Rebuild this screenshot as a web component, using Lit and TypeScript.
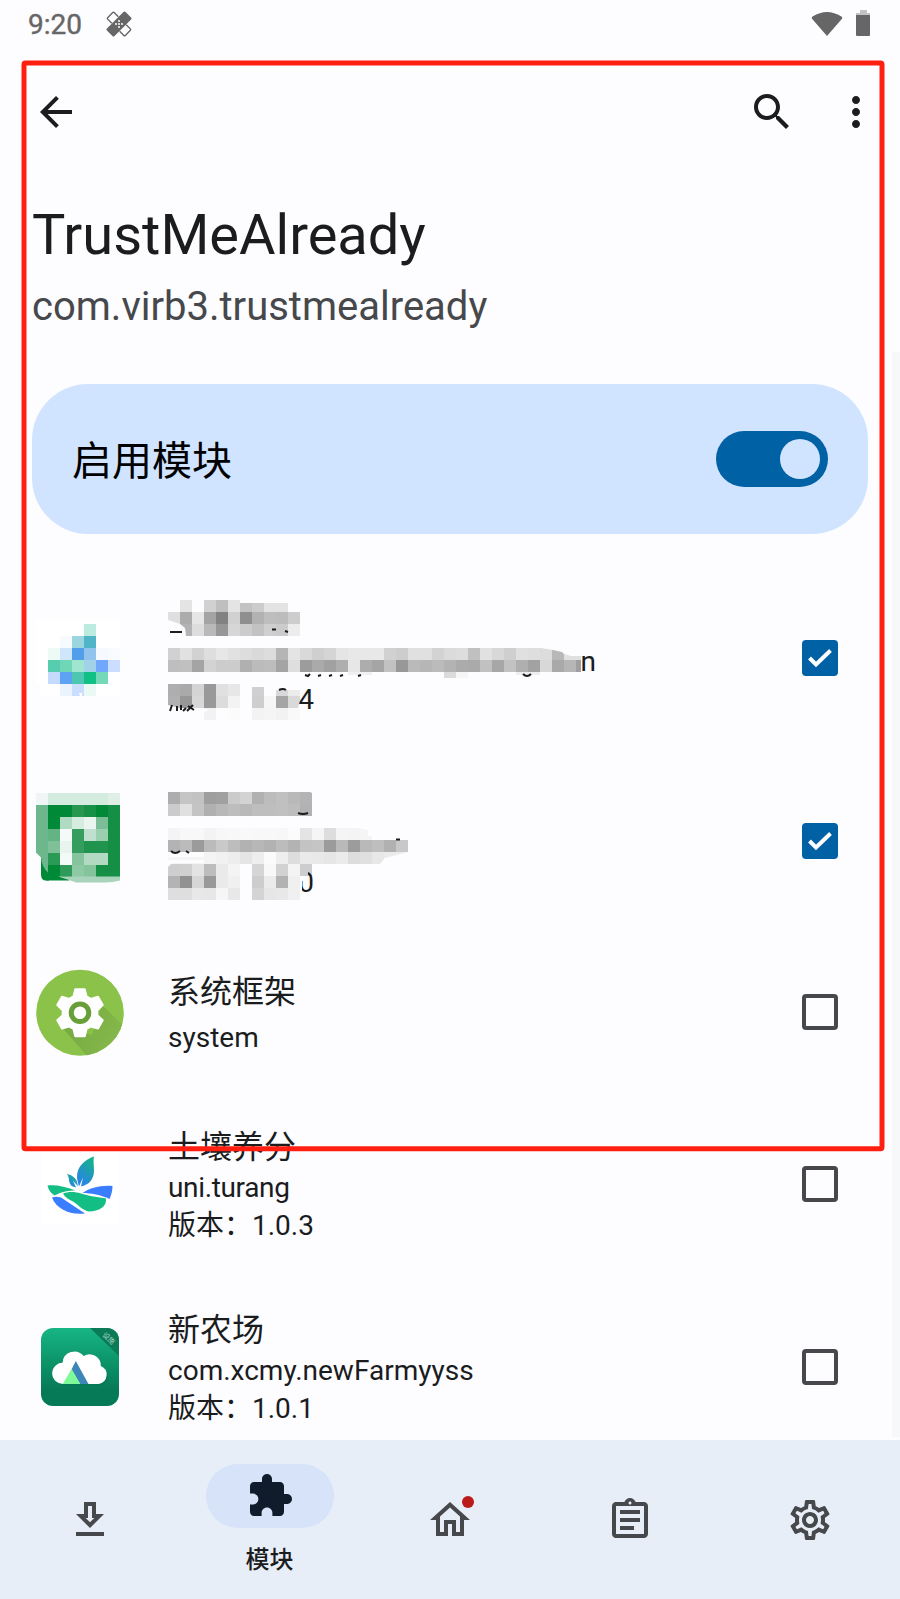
import { LitElement, html, svg, css, nothing } from "lit";
import { customElement, property } from "lit/decorators.js";

const CELL = 12;

// Each mosaic line: origin x, origin y, then one shade per 12px cell ("-" leaves a hole).
type Line = [number, number, string, number?];

const shade = (v: string) => (v.length === 2 ? `#${v}${v}${v}` : `#${v}`);

const mosaic = (lines: Line[]) =>
  lines.map(([x, y, cells, h = CELL]) =>
    cells.split(" ").map((c, i) =>
      c === "-"
        ? nothing
        : svg`<rect x=${x + i * CELL} y=${y} width=${CELL} height=${h} fill=${shade(c)} shape-rendering="crispEdges"/>`
    )
  );

const textMosaicA: Line[] = [
  [168, 600, "- e4 - d1 bf e4"],
  [240, 603, "c3 cc e3 e3", 9],
  [168, 612, "df ac e6 a4 82 d1 8f b2 be bc cd"],
  [168, 624, "- b3 dd b9 97 d6 cc c2 cf cb ec"],
  [168, 648, "d1 e1 d2 de e7 e1 dd d9 dd b5 e4 d9 cf d5 e5 e8 e8 e8 d1 cd e0 e0 d3 db dd c0 e1 d8 cf e0 de dc b8 e0 e0"],
  [168, 660, "be c0 a4 d3 cc cc b0 bb bd a4 de 9c aa a1 ae e7 ad a5 c2 98 ba b6 bb b3 ab aa c1 a7 c2 af a2 d8 a9 b6 9f"],
  [348, 672, "f0 f0", 3],
  [444, 672, "db f6", 6],
  [516, 672, "ee ee", 3],
  [168, 684, "ae aa d4 99 e0 e7"],
  [252, 687, "d0", 9],
  [276, 690, "d8 ec", 6],
  [168, 696, "b0 97 d7 99 dc f3 - ce f6 a5 d9"],
  [204, 708, "f2 - fb - f3 f5 f2 f9"],
];

const textMosaicB: Line[] = [
  [168, 792, "ad c5 c2 9e a0 cb d3 b1 bc c0 b9 b3"],
  [168, 804, "cb e0 c4 b0 b8 bd b9 be be c0 bd b2"],
  [168, 828, "f4 f8 f8 f3 f7 f8 f9 f8 f8 f7 fb e4 f5 dd f5 f4 f5"],
  [168, 840, "b3 bb 9b bb c9 bd b2 b7 b2 bc b3 c3 c5 9b b9 9c b9 be b1 c8"],
  [168, 857, "f5 f5 f5", 7],
  [204, 852, "f4 f1 ed e5 ee fb ee dd ea e9 e6 eb dd e0 e8"],
  [384, 852, "eb ec", 6],
  [168, 864, "ce d0 e3 bd ea f4 - d5 f8 d2 f4 cd"],
  [168, 876, "b3 91 d6 99 ea f0 - cd eb b2 f0"],
  [168, 888, "de de e8 e7 f6 e8 - d4 e6 e8 f0"],
];

const iconMosaicA: Line[] = [
  [84, 624, "bcebe0"],
  [60, 636, "f6fbff 9bd5e0 50b5c6"],
  [48, 648, "eefaf5 d0e7fb 539eea 91c3ee f6f9ff f9fbff"],
  [48, 660, "57cdaf 6fd7b6 9fe5cf a1d2e8 71a7fc ccdeff"],
  [48, 672, "c5daff 5ea3f3 4dc7b0 10c085 74d9b8"],
  [60, 684, "ebf3ff cadeff ebf9f5"],
];

const iconMosaicB: Line[] = [
  [36, 792, "eff6f5 d4ebe0 d4ebe0 d4ebe0 d4ebe0 d4ebe0 dfefe6"],
  [36, 804, "6db78c 008a38 008a38 27964e 189148 008a38 158f46"],
  [36, 816, "6db78c 008a38 b0dac2 d6ece0 ebf5f0 7abd96 158f46"],
  [36, 828, "6db78c 62b482 f5faf8 359e5e bfe0cf 9ad0af 158f46"],
  [36, 840, "6db78c 7fc098 e9f4ee 359e5e 20944e 20944e 158f46"],
  [48, 852, "2b9a56 f4faf8 86c49e b2dac3 b2dac3 158f46"],
  [48, 864, "008a38 2f9b5a 8ec9a5 84c49d 158f46 158f46"],
];

const blurredIconA = svg`
  <path d="M36 619h84v77H41l-1-12h-4z" fill="#fff"/>
  ${mosaic(iconMosaicA)}
  <path d="M79 693h3v3h-2z" fill="#fff"/>`;

const blurredIconB = svg`
  <path d="M41 850h8v30h-3q-5 0-5-6z" fill="#008a38"/>
  <path d="M36 852h12v20q-6-5-7-15z" fill="#6db78c"/>
  ${mosaic(iconMosaicB)}
  <path d="M48 876h22l-1 4H46z" fill="#008a38"/>
  <path d="M58 876h62v4q-8 2-14 2H76q-8-3-18-6z" fill="#a8d4bb"/>`;

const cog = (n: number, cx: number, cy: number, r1: number, r2: number) => {
  const pts: string[] = [];
  for (let i = 0; i < n; i++) {
    const a = (i / n) * Math.PI * 2 - Math.PI / 2;
    for (const [d, r] of [[-0.38, r2], [-0.2, r1], [0.2, r1], [0.38, r2]]) {
      pts.push(`${(cx + Math.cos(a + d) * r).toFixed(2)},${(cy + Math.sin(a + d) * r).toFixed(2)}`);
    }
  }
  return pts.join(" ");
};

const systemIcon = svg`
  <defs>
    <clipPath id="disc"><ellipse cx="80" cy="1012.7" rx="43.8" ry="43"/></clipPath>
    <linearGradient id="shadow" x1="0" y1="0.2" x2="1" y2="0.6">
      <stop offset="0" stop-color="#74a743"/><stop offset="1" stop-color="#86ba4a"/>
    </linearGradient>
  </defs>
  <ellipse cx="80" cy="1012.7" rx="43.8" ry="43" fill="#8bc34a"/>
  <path clip-path="url(#disc)" fill="url(#shadow)" d="M60 1025l27 31h40v-27l-25-24-10 30z"/>
  <polygon points=${cog(6, 80, 1012.7, 24, 17.5)} fill="#fff" stroke="#fff" stroke-width="2" stroke-linejoin="round"/>
  <circle cx="80" cy="1012.7" r="8.8" fill="#fff" stroke="#689f38" stroke-width="5"/>`;

const leafIcon = svg`
  <defs>
    <linearGradient id="leaf" x1="0.2" y1="1" x2="0.7" y2="0">
      <stop offset="0" stop-color="#2b7ff0"/><stop offset="1" stop-color="#16b18c"/>
    </linearGradient>
  </defs>
  <rect x="41" y="1145" width="78" height="78" fill="#fff"/>
  <path fill="url(#leaf)" d="M94 1156c-9 3-17 10-17 20 0 3 1 6 2 10l4-9-2 9c9-2 13-8 13-16 0-5-1-9 0-14z"/>
  <path fill="url(#leaf)" d="M67 1173.500c5 1 9 4 10 8l1 4.500-5-6 3 7c-5-1-6-3-7-7 0-3-1-5-2-6.500z"/>
  <path fill="#12be84" d="M47.500 1185c8-1 18 1 28 5-6 0-14 1-21 5-3-2-6-5-7-10z"/>
  <path fill="#3b7dff" d="M112.500 1185.500c-12-1-23 2-30 7 8 0 19 2 27 6 2-4 3-9 3-13z"/>
  <path fill="#3b7dff" d="M52 1197c3-1 6-1 9 0l24 16c-15 2-29-5-33-16z"/>
  <path fill="#12be84" d="M63 1193c5-2 12-2 18 0 10 3 20 4 25 5 1 8-7 13-17 13-6-1-10-6-16-10-4-2-8-4-10-8z"/>`;

const cloudIcon = svg`
  <defs>
    <linearGradient id="tile" x1="0" y1="0" x2="0" y2="1">
      <stop offset="0" stop-color="#17b584"/><stop offset="0.45" stop-color="#0b9368"/><stop offset="0.8" stop-color="#067956"/><stop offset="1" stop-color="#067956"/>
    </linearGradient>
    <clipPath id="tileClip"><rect x="41" y="1328" width="78" height="78" rx="12"/></clipPath>
  </defs>
  <g clip-path="url(#tileClip)">
    <rect x="41" y="1328" width="78" height="78" fill="url(#tile)"/>
    <path d="M90 1328h30v29z" fill="#0b7a57"/>
    <text x="109" y="1341" font-size="7" fill="#a9d9c6" text-anchor="middle" transform="rotate(45 109 1338)" font-family="Noto Sans CJK SC">设施</text>
  </g>
  <g transform="translate(.6 0)">
    <path fill="#055f45" opacity=".25" d="M62 1385.500h34a9 9 0 0 0 4-18.500 11 11 0 0 0-17-11 11.500 11.500 0 0 0-21 7 11.500 11.500 0 0 0 0 22.500z"/>
    <path fill="#fff" d="M62.500 1384a10.600 10.600 0 0 1-.5-21.300A11.800 11.800 0 0 1 83 1356a11.300 11.300 0 0 1 17.200 10A9.400 9.400 0 0 1 98 1384z"/>
    <path fill="#3d86b8" d="M75.200 1361l12.700 23h-8.500l-8.500-14.500z"/>
    <path fill="#7efb98" d="M71 1369l8.600 15H62z"/>
  </g>`;

const blurredTextA = svg`
  <g fill="#1a1c1e">
    <rect x="170" y="631" width="12" height="2"/>
    <text x="298.300" y="708.800" font-size="28">4</text>
    <text x="580.400" y="670.800" font-size="28">n</text>
  </g>
  <clipPath id="edgeA"><path d="M168 611H180V600H240L245 603H288V612H300V636H186L185 628L180 624L168 620ZM168 648H541L553 650L562 652L564 654L571 656H581V682H168ZM168 684H300V700L298 708H300V720H204V712L210 710L198 708L180 708L168 705Z"/></clipPath>
  <g clip-path="url(#edgeA)">${mosaic(textMosaicA)}</g>
  <g fill="none" stroke="#1a1c1e" stroke-width="2">
    <path d="M272 629.500h4M285 631l3 1M305 675l3 1 2-2M318 676l3-1M329 676l3-1M340 676l3-1M358 676l3-1M523 674q4 4 8 0"/>
    <path d="M170 711l2-6M177 711v-5M181 710v-5M183 711l3-3M188 706l6 4M187 711l6-6M279 690q4-2 7 0"/>
  </g>`;

const blurredTextB = svg`
  <clipPath id="edgeB"><path d="M168 792h142l2 1v23H168v12h191l9 2v6l40 3v13l-23 6-5 6h-68v12l-9 12v24h-48v-12h-12v10l-66-3-9-1v-39l4-4h32v-3h-36z"/></clipPath>
  <g clip-path="url(#edgeB)">${mosaic(textMosaicB)}</g>
  <clipPath id="tailB"><path d="M308 868h8v26h-14v-13h6z"/></clipPath>
  <path d="M302 880h6v12h-6z" fill="#fdfcff"/>
  <text clip-path="url(#tailB)" x="298.300" y="892" font-size="28" fill="#1a1c1e">0</text>
  <g fill="none" stroke="#1a1c1e" stroke-width="2">
    <path d="M171 851q4 4 9 0M186 851l3 2M298 813q5 2 10 0M396 839.500h4"/>
  </g>`;

type Row = {
  kind: string;
  iconBox: string;
  icon: unknown;
  textBox?: string;
  text?: unknown;
  lines?: string[];
  checked: boolean;
};

const rows: Row[] = [
  { kind: "first", iconBox: "36 614 88 88", icon: blurredIconA, textBox: "168 567 444 182", text: blurredTextA, checked: true },
  { kind: "second", iconBox: "36 796.5 88 88", icon: blurredIconB, textBox: "168 749 444 183", text: blurredTextB, checked: true },
  { kind: "system", iconBox: "36 968 88 88", icon: systemIcon, lines: ["系统框架", "system"], checked: false },
  { kind: "full", iconBox: "36 1139.5 88 88", icon: leafIcon, lines: ["土壤养分", "uni.turang", "版本：1.0.3"], checked: false },
  { kind: "last", iconBox: "36 1323 88 88", icon: cloudIcon, lines: ["新农场", "com.xcmy.newFarmyyss", "版本：1.0.1"], checked: false },
];

@customElement("app-entry")
export class AppEntry extends LitElement {
  @property({ attribute: false }) row!: Row;

  static styles = css`
    :host { display: block; }
    .row { display: grid; grid-template-columns: 88px 1fr 36px; column-gap: 44px; padding: 0 62px 0 36px; align-items: center; height: 182px; box-sizing: border-box; }
    .row.second, .row.full { height: 183px; }
    .row.system { height: 160px; }
    .row.last { height: 184px; }
    svg { display: block; overflow: visible; }
    .icon { width: 88px; height: 88px; }
    .blurred { width: 444px; height: 182px; }
    .second .blurred { height: 183px; }
    .copy { align-self: start; padding-top: 32px; }
    .name { font-size: 32px; line-height: 46px; height: 45px; }
    .system .copy { padding-top: 33px; }
    .system .name { line-height: 54px; height: 54px; }
    .detail { font-size: 28px; line-height: 38px; height: 38px; white-space: nowrap; }
    .full .name + .detail { letter-spacing: -0.35px; }
    .box { width: 36px; height: 36px; box-sizing: border-box; border: 4px solid #46484b; border-radius: 4px; }
    .box.on { border: 0; background: #0061a4; }
    .box svg { width: 36px; height: 36px; }
  `;

  render() {
    const r = this.row;
    return html`<div class="row ${r.kind}">
      <svg class="icon" viewBox=${r.iconBox}>${r.icon}</svg>
      ${r.lines
        ? html`<div class="copy">
            <div class="name">${r.lines[0]}</div>
            ${r.lines.slice(1).map((l) => html`<div class="detail">${l}</div>`)}
          </div>`
        : html`<svg class="blurred" viewBox=${r.textBox}>${r.text}</svg>`}
      <div class="box ${r.checked ? "on" : ""}">
        ${r.checked
          ? html`<svg viewBox="0 0 36 36"><path d="M7.500 18l6.500 6.500L28.500 10.500" fill="none" stroke="#fff" stroke-width="4"/></svg>`
          : nothing}
      </div>
    </div>`;
  }
}

const navIcons = {
  download: "M13 5v6h1.170L12 13.170 9.830 11H11V5h2m2-2H9v6H5l7 7 7-7h-4V3zm4 15H5v2h14v-2z",
  extension: "M20.5 11H19V7c0-1.100-.9-2-2-2h-4V3.500C13 2.120 11.880 1 10.500 1S8 2.120 8 3.500V5H4c-1.100 0-1.990.9-1.990 2v3.800H3.500c1.490 0 2.700 1.210 2.700 2.700s-1.210 2.700-2.700 2.700H2V20c0 1.100.9 2 2 2h3.800v-1.500c0-1.490 1.210-2.700 2.700-2.700 1.490 0 2.700 1.210 2.700 2.700V22H17c1.100 0 2-.9 2-2v-4h1.500c1.380 0 2.500-1.120 2.500-2.500S21.880 11 20.500 11z",
  home: "M12 5.690l5 4.500V18h-2v-6H9v6H7v-7.810l5-4.500M12 3L2 12h3v8h6v-6h2v6h6v-8h3L12 3z",
  logs: "M7 15h7v2H7zm0-4h10v2H7zm0-4h10v2H7zm12-4h-4.180C14.400 1.840 13.300 1 12 1c-1.300 0-2.400.84-2.820 2H5c-.14 0-.27.01-.4.04-.39.08-.74.28-1.010.55-.18.18-.33.4-.43.64-.1.23-.16.49-.16.77v14c0 .27.06.54.16.78s.25.45.43.64c.27.27.62.47 1.010.55.13.02.26.03.4.03h14c1.100 0 2-.9 2-2V5c0-1.100-.9-2-2-2zm-7-.25c.41 0 .75.34.75.75s-.34.75-.75.75-.75-.34-.75-.75.34-.75.75-.75zM19 19H5V5h14v14z",
  settings: "M19.43 12.98c.04-.32.07-.64.07-.98 0-.34-.03-.66-.07-.98l2.110-1.650c.19-.15.24-.42.12-.64l-2-3.460c-.09-.16-.26-.25-.44-.25-.06 0-.12.01-.17.03l-2.490 1c-.52-.4-1.080-.73-1.690-.98l-.38-2.650C14.460 2.180 14.250 2 14 2h-4c-.25 0-.46.18-.49.42l-.38 2.650c-.61.25-1.170.59-1.690.98l-2.490-1c-.06-.02-.12-.03-.18-.03-.17 0-.34.09-.43.25l-2 3.460c-.13.22-.07.49.12.64l2.110 1.650c-.04.32-.07.65-.07.98 0 .33.03.66.07.98l-2.110 1.650c-.19.15-.24.42-.12.64l2 3.460c.09.16.26.25.44.25.06 0 .12-.01.17-.03l2.490-1c.52.4 1.080.73 1.690.98l.38 2.650c.03.24.24.42.49.42h4c.25 0 .46-.18.49-.42l.38-2.650c.61-.25 1.170-.59 1.690-.98l2.490 1c.06.02.12.03.18.03.17 0 .34-.09.43-.25l2-3.460c.12-.22.07-.49-.12-.64l-2.110-1.650zm-1.980-1.710c.04.31.05.52.05.73 0 .21-.02.43-.05.73l-.14 1.130.89.7 1.080.84-.7 1.210-1.270-.51-1.040-.42-.9.68c-.43.32-.84.56-1.250.73l-1.060.43-.16 1.130-.2 1.350h-1.400l-.19-1.350-.16-1.130-1.060-.43c-.43-.18-.83-.41-1.230-.71l-.91-.7-1.060.43-1.270.51-.7-1.210 1.080-.84.89-.7-.14-1.130c-.03-.31-.05-.54-.05-.74s.02-.43.05-.73l.14-1.130-.89-.7-1.080-.84.7-1.210 1.270.51 1.040.42.9-.68c.43-.32.84-.56 1.250-.73l1.060-.43.16-1.130.2-1.350h1.390l.19 1.350.16 1.130 1.060.43c.43.18.83.41 1.230.71l.91.7 1.060-.43 1.270-.51.7 1.210-1.070.85-.89.7.14 1.130zM12 8c-2.210 0-4 1.790-4 4s1.790 4 4 4 4-1.790 4-4-1.790-4-4-4zm0 6c-1.100 0-2-.9-2-2s.9-2 2-2 2 .9 2 2-.9 2-2 2z",
};

const glyph = (d: string) => html`<svg class="glyph" viewBox="0 0 24 24"><path d=${d}/></svg>`;

@customElement("app-root")
export class AppRoot extends LitElement {
  static styles = css`
    :host { display: block; width: 900px; height: 1599px; overflow: hidden; position: relative; background: #fdfcff; color: #1a1c1e; font-family: Roboto, "Noto Sans CJK SC", sans-serif; }
    .screen { display: flex; flex-direction: column; height: 100%; }
    svg { display: block; }
    .glyph { width: 48px; height: 48px; fill: currentColor; }
    .status { display: flex; align-items: center; height: 48px; padding: 0 29px 0 28px; box-sizing: border-box; color: #666; }
    .clock { font-size: 28px; font-weight: 400; -webkit-text-stroke: 0.4px #666; line-height: 48px; padding-top: 2px; flex: 1; display: flex; gap: 23px; align-items: center; height: 46px; }
    .clock svg { margin-top: -2px; }
    .tools { display: flex; align-items: center; height: 128px; padding: 0 20px 0 32px; }
    .tools .search { margin-left: auto; margin-right: 36px; }
    .heading { padding: 27px 32px 0; }
    .title { font-size: 56px; line-height: 64px; }
    .package { font-size: 40px; line-height: 48px; margin-top: 16px; color: #46484b; }
    .card { margin: 53px 32px 33px; height: 150px; border-radius: 56px; background: #d1e4ff; color: #000; display: flex; align-items: center; justify-content: space-between; padding: 0 40px; box-sizing: border-box; flex: none; font-size: 40px; }
    .card-label { padding-bottom: 2px; }
    .switch { width: 112px; height: 56px; border-radius: 28px; background: #0061a4; display: flex; align-items: center; justify-content: flex-end; padding-right: 8px; box-sizing: border-box; }
    .thumb { width: 40px; height: 40px; border-radius: 50%; background: #d1e4ff; }
    .list { flex: 1; min-height: 0; overflow: hidden; }
    .nav { flex: none; height: 159px; background: #e8eef7; display: grid; grid-template-columns: repeat(5, 180px); color: #46484b; }
    .item { display: flex; flex-direction: column; align-items: center; padding-top: 56px; position: relative; }
    .item.active { padding-top: 24px; color: #101c2b; }
    .pill { width: 128px; height: 64px; border-radius: 32px; background: #d7e3f8; display: grid; place-items: center; }
    .label { font-size: 24px; font-weight: 500; line-height: 32px; margin-top: 16px; padding-right: 1px; color: #1a1c1e; }
    .badge { position: absolute; left: 102px; top: 56px; width: 12px; height: 12px; border-radius: 50%; background: #ba1a1a; }
    .track { position: absolute; right: 0; top: 352px; width: 8px; height: 1085px; background: #f7f8fa; }
    .marker { position: absolute; inset: 0; width: 900px; height: 1599px; pointer-events: none; }
  `;

  render() {
    return html`
      <div class="screen">
        <div class="status">
          <div class="clock">
            <span>9:20</span>
            <svg width="28" height="28" viewBox="-14 -14 28 28">
              <g transform="rotate(-45)">
                <path d="M-4.600-5.500v-6q0-1 1-1h7.200q1 0 1 1v6M-4.600 5.500v6q0 1 1 1h7.200q1 0 1-1v-6" fill="none" stroke="#666" stroke-width="1.400"/>
                <rect x="-13.200" y="-5.400" width="26.400" height="10.800" rx="1.500" fill="#666"/>
              </g>
              <g fill="#fdfcff"><circle cx="0" cy="-3" r="1"/><circle cx="0" cy="3" r="1"/><circle cx="-3" cy="0" r="1"/><circle cx="3" cy="0" r="1"/><circle r="1"/></g>
            </svg>
          </div>
          <svg width="32" height="28" viewBox="0 0 32 28"><path d="M16 26L.800 8.400Q.600 7.200 1.600 6.600Q16-2.600 30.400 6.600Q31.400 7.200 31.200 8.400z" fill="#666"/></svg>
          <svg width="28" height="28" viewBox="0 0 28 28"><path d="M17 0h7v3h3v2H13V3h4z" fill="#c2c2c3"/><path d="M13 5h14v20q0 1-1 1H14q-1 0-1-1z" fill="#666"/></svg>
        </div>
        <div class="tools">
          ${glyph("M20 11H7.830l5.590-5.590L12 4l-8 8 8 8 1.410-1.410L7.830 13H20z")}
          <span class="search">${glyph("M15.5 14h-.79l-.28-.27C15.410 12.590 16 11.110 16 9.500 16 5.910 13.090 3 9.500 3S3 5.910 3 9.500 5.910 16 9.500 16c1.610 0 3.090-.59 4.230-1.570l.27.28v.79l5 4.990L20.490 19l-4.990-5zm-6 0C7.010 14 5 11.990 5 9.500S7.010 5 9.500 5 14 7.010 14 9.500 11.990 14 9.500 14z")}</span>
          ${glyph("M12 8c1.100 0 2-.9 2-2s-.9-2-2-2-2 .9-2 2 .9 2 2 2zm0 2c-1.100 0-2 .9-2 2s.9 2 2 2 2-.9 2-2-.9-2-2-2zm0 6c-1.100 0-2 .9-2 2s.9 2 2 2 2-.9 2-2-.9-2-2-2z")}
        </div>
        <div class="heading">
          <div class="title">TrustMeAlready</div>
          <div class="package">com.virb3.trustmealready</div>
        </div>
        <div class="card">
          <span class="card-label">启用模块</span>
          <div class="switch"><div class="thumb"></div></div>
        </div>
        <div class="list">${rows.map((row) => html`<app-entry .row=${row}></app-entry>`)}</div>
        <div class="nav">
          <div class="item">${glyph(navIcons.download)}</div>
          <div class="item active">
            <div class="pill">${glyph(navIcons.extension)}</div>
            <div class="label">模块</div>
          </div>
          <div class="item">${glyph(navIcons.home)}<div class="badge"></div></div>
          <div class="item">${glyph(navIcons.logs)}</div>
          <div class="item">${glyph(navIcons.settings)}</div>
        </div>
      </div>
      <div class="track"></div>
      <svg class="marker" viewBox="0 0 900 1599">
        <rect x="24" y="63" width="858" height="1085.700" rx="1.500" fill="none" stroke="#ff1f10" stroke-width="5"/>
      </svg>
    `;
  }
}
